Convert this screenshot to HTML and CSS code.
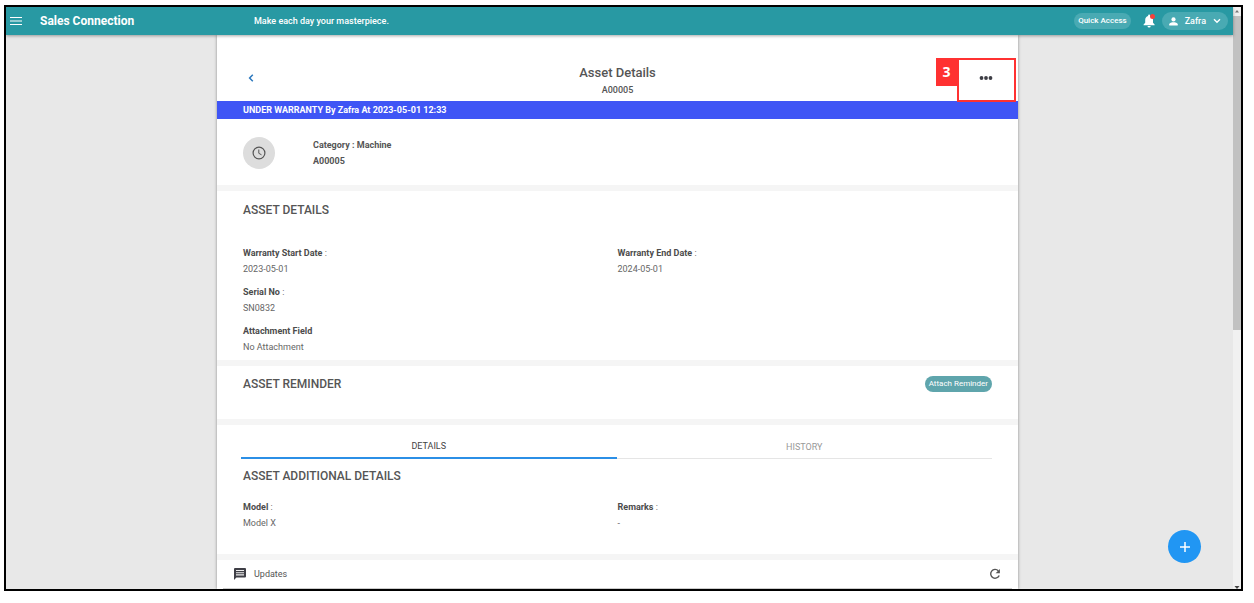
FILE: index.html
```html
<!DOCTYPE html>
<html lang="en">
<head>
<meta charset="utf-8">
<title>Asset Details</title>
<link rel="stylesheet" href="styles.css">
</head>
<body>
<div class="frame">
  <div class="app">
    <header class="topbar">
      <div class="brand">
        <button class="icon-btn" aria-label="Menu"><svg width="12" height="10" viewBox="0 0 12 10"><path d="M0 1.500h12M0 5h12M0 8.500h12" stroke="#fff" stroke-width="1.100"/></svg></button>
        <span class="brand-name">Sales Connection</span>
      </div>
      <span class="tagline">Make each day your masterpiece.</span>
      <div class="actions">
        <button class="pill quick">Quick Access</button>
        <button class="icon-btn bell" aria-label="Notifications"><svg width="14" height="14" viewBox="0 0 14 14"><path d="M5.500 12a1.600 1.600 0 0 0 3.200 0zM11 8.800V6c0-2.100-1.100-3.500-2.900-4V1.500a1 1 0 0 0-2 0V2C4.300 2.500 3.200 4 3.200 6v2.800L1.600 10.400v.9h11v-.9z" fill="#fff"/><circle cx="10.500" cy="2.600" r="2.500" fill="#f5413b"/></svg></button>
        <button class="pill user"><svg width="9" height="9" viewBox="0 0 9 9"><circle cx="4.500" cy="2.400" r="2.100" fill="#fff"/><path d="M0.300 8.500V7.300C.3 5.900 3 5.300 4.500 5.300s4.200.6 4.200 2v1.200z" fill="#fff"/></svg><span>Zafra</span><svg width="8" height="6" viewBox="0 0 8 6"><path d="M1 1.200l3 3 3-3" fill="none" stroke="#fff" stroke-width="1.400"/></svg></button>
      </div>
    </header>
    <main class="content">
      <article class="card">
        <div class="titlebar">
          <a class="back" href="#" aria-label="Back"><svg width="6" height="8" viewBox="0 0 6 8"><path d="M4.800.8L1.600 4l3.200 3.200" fill="none" stroke="#2a77bd" stroke-width="1.500"/></svg></a>
          <div class="title">
            <h1>Asset Details</h1>
            <span class="code">A00005</span>
          </div>
          <button class="icon-btn more" aria-label="More"><svg width="14" height="6" viewBox="0 0 14 6"><g fill="#3d3d44"><circle cx="2.500" cy="3" r="1.900"/><circle cx="7" cy="3" r="1.900"/><circle cx="11.500" cy="3" r="1.900"/></g></svg></button>
          <div class="callout"><span class="callout-no">3</span><span class="callout-box"></span></div>
        </div>
        <div class="banner">UNDER WARRANTY By Zafra At 2023-05-01 12:33</div>
        <section class="section summary">
          <span class="avatar"><svg width="14" height="14" viewBox="0 0 14 14" fill="none" stroke="#555"><circle cx="7" cy="7" r="5.900" stroke-width="1.200"/><path d="M6.800 3.500v3.800l2.700 1.500" stroke-width="1"/></svg></span>
          <div class="summary-text"><span>Category : Machine</span><span>A00005</span></div>
        </section>
        <section class="section details">
          <h2>ASSET DETAILS</h2>
          <dl class="fields">
            <div class="field"><dt><b>Warranty Start Date</b> :</dt><dd>2023-05-01</dd></div>
            <div class="field"><dt><b>Warranty End Date</b> :</dt><dd>2024-05-01</dd></div>
            <div class="field wide"><dt><b>Serial No</b> :</dt><dd>SN0832</dd></div>
            <div class="field wide"><dt><b>Attachment Field</b></dt><dd>No Attachment</dd></div>
          </dl>
        </section>
        <section class="section reminder">
          <h2>ASSET REMINDER</h2>
          <button class="attach">Attach Reminder</button>
        </section>
        <section class="section additional">
          <div class="tabs" role="tablist">
            <button class="tab active" role="tab" aria-selected="true">DETAILS</button>
            <button class="tab" role="tab" aria-selected="false">HISTORY</button>
          </div>
          <h2>ASSET ADDITIONAL DETAILS</h2>
          <dl class="fields">
            <div class="field"><dt><b>Model</b> :</dt><dd>Model X</dd></div>
            <div class="field"><dt><b>Remarks</b> :</dt><dd class="dash">-</dd></div>
          </dl>
        </section>
        <section class="updates">
          <svg width="12" height="12" viewBox="0 0 12 12"><path d="M1 0h10a1 1 0 0 1 1 1v7.500a1 1 0 0 1-1 1H2.400L0 12V1a1 1 0 0 1 1-1z" fill="#3f3f46"/><path d="M2 2.500h8M2 4.700h8M2 6.900h8" stroke="#eee" stroke-width="1.100"/></svg>
          <span>Updates</span>
          <button class="icon-btn refresh" aria-label="Refresh"><svg width="12" height="12" viewBox="0 0 12 12"><path d="M9.300 2.800A4.400 4.400 0 1 0 10.200 7.400" fill="none" stroke="#555" stroke-width="1.400"/><path d="M10.900.9v4.300H6.600z" fill="#555"/></svg></button>
        </section>
      </article>
      <button class="fab" aria-label="Add"><svg width="12" height="12" viewBox="0 0 12 12"><path d="M6 1v10M1 6h10" stroke="#fff" stroke-width="1.500"/></svg></button>
    </main>
  </div>
  <div class="scrollbar" aria-hidden="true">
    <svg class="arrow" width="8" height="9" viewBox="0 0 8 9"><path d="M2 5.500l2-2.500 2 2.500z" fill="#777"/></svg>
    <span class="thumb"></span>
    <svg width="8" height="4" viewBox="0 0 8 4"><path d="M1.500 1h5L4 4z" fill="#444"/></svg>
  </div>
</div>
</body>
</html>
```

FILE: styles.css
```css
* { box-sizing: border-box; }

body {
  margin: 0;
  height: 100vh;
  padding: 5px 11px 12px 4px;
  background: #fff;
  color: #555;
  font-family: Roboto, "Liberation Sans", sans-serif;
  font-size: 9px;
  line-height: 16px;
}

h1, h2, dl, dd { margin: 0; }
button { border: 0; padding: 0; font: inherit; cursor: pointer; }
svg { display: block; flex: none; }

.frame {
  display: flex;
  height: 100%;
  border: 2px solid #000;
  overflow: hidden;
}

.app {
  flex: 1;
  display: flex;
  flex-direction: column;
  background: #e8e8e8;
}

.topbar {
  display: grid;
  grid-template-columns: 248px 1fr auto;
  align-items: center;
  height: 28px;
  flex: none;
  padding-right: 5px;
  background: #2899a3;
  color: #fff;
  box-shadow: 0 1px 3px rgba(0, 0, 0, 0.35);
  z-index: 1;
}

.brand { display: flex; align-items: center; gap: 18px; padding-left: 4px; }
.brand-name { font-size: 12px; font-weight: 700; }
.tagline { font-weight: 500; }
.icon-btn { background: none; }
.actions { display: flex; align-items: center; }

.pill {
  display: flex;
  align-items: center;
  border-radius: 9px;
  background: #49aab3;
  color: #fff;
}

.quick { height: 16px; padding: 0 4px; font-size: 8px; font-weight: 500; }
.bell { margin: 0 6px 0 11px; }
.user { height: 18px; padding: 0 7px; gap: 7px; font-weight: 500; }

.content {
  position: relative;
  flex: 1;
  min-height: 0;
  display: grid;
  grid-template-columns: 211fr 801fr 215fr;
}

.card {
  grid-column: 2;
  min-width: 0;
  overflow: hidden;
  background: #fff;
  box-shadow: 0 0 3px rgba(0, 0, 0, 0.4);
}

.titlebar {
  position: relative;
  display: grid;
  grid-template-columns: 60px 1fr 60px;
  align-items: center;
  padding: 29px 0 3px;
}

.back { padding: 0 0 6px 31px; }
.title { display: flex; flex-direction: column; text-align: center; }
.title h1 { font-size: 13px; font-weight: 500; line-height: 18px; }
.code { font-weight: 500; }
.more { padding: 0 0 6px 21px; }

.callout {
  position: absolute;
  top: 23px;
  right: 2px;
  display: flex;
  align-items: flex-start;
  pointer-events: none;
}

.callout-no {
  width: 21px;
  background: #ff3131;
  color: #fff;
  font: 700 14px/28px "Open Sans", sans-serif;
  text-align: center;
}

.callout-box { width: 59px; height: 44px; border: 2px solid #ff3131; }

.banner {
  padding: 0 26px;
  background: #3f55f5;
  color: #fff;
  font-weight: 700;
  line-height: 18px;
}

.section { border-bottom: 6px solid #f5f5f5; }
.section h2 { font-size: 12px; font-weight: 500; line-height: 16px; }

.summary { display: flex; align-items: center; gap: 38px; padding: 18px 26px 16px; }
.summary-text { display: flex; flex-direction: column; font-weight: 700; }

.avatar {
  display: flex;
  align-items: center;
  justify-content: center;
  width: 32px;
  height: 32px;
  border-radius: 50%;
  background: #ddd;
}

.fields { display: grid; grid-template-columns: 1fr 1fr; row-gap: 7px; }
.wide { grid-column: 1 / -1; }
.field b { font-weight: 700; color: #4c4c4c; }
.field dd { color: #666; }

.details { padding: 11px 26px 5px; }
.details h2 { margin-bottom: 27px; }

.reminder {
  display: flex;
  align-items: center;
  justify-content: space-between;
  padding: 10px 26px 27px;
}

.attach {
  height: 16px;
  padding: 0 4px;
  border-radius: 8px;
  background: #5fa5ac;
  color: #fff;
  font-size: 8px;
}

.additional { padding: 10px 26px 23px; }
.tabs { display: flex; margin: 0 0 9px -2px; }

.tab {
  flex: 1;
  padding: 3px 0;
  border-bottom: 1px solid #e5e5e5;
  background: none;
  color: #999;
}

.tab.active { border-bottom: 2px solid #2b8fe6; color: #444; }
.additional h2 { margin-bottom: 15px; }

.updates {
  display: flex;
  align-items: center;
  gap: 8px;
  margin: 0 6px;
  padding: 6px 11px;
  border-bottom: 1px solid #ccc;
}

.refresh { margin-left: auto; }

.fab {
  position: absolute;
  right: 32px;
  bottom: 26px;
  display: flex;
  align-items: center;
  justify-content: center;
  width: 33px;
  height: 33px;
  border-radius: 50%;
  background: #2196f3;
}

.scrollbar {
  display: flex;
  flex-direction: column;
  justify-content: space-between;
  width: 8px;
  background: #f1f1f1;
}

.thumb { height: 54%; margin-bottom: auto; background: #c1c1c1; }
```
